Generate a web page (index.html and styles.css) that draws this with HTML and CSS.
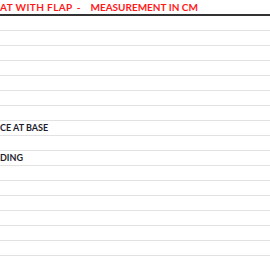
FILE: index.html
```html
<!DOCTYPE html>
<html>
<head>
<meta charset="utf-8">
<link rel="stylesheet" href="styles.css">
</head>
<body>
<div class="sheet">
  <div class="head">
    <span class="h-a">AT WITH FLAP</span>
    <span class="h-dash">-</span>
    <span class="h-b">MEASUREMENT IN CM</span>
  </div>
  <div class="row"></div>
  <div class="row"></div>
  <div class="row"></div>
  <div class="row"></div>
  <div class="row"></div>
  <div class="row"></div>
  <div class="row"></div>
  <div class="row label">CE AT BASE</div>
  <div class="row"></div>
  <div class="row label">DING</div>
  <div class="row"></div>
  <div class="row"></div>
  <div class="row"></div>
  <div class="row"></div>
  <div class="row"></div>
  <div class="row"></div>
</div>
</body>
</html>
```
FILE: styles.css
```css
html, body {
  margin: 0;
  padding: 0;
  background: #ffffff;
}
.sheet {
  width: 270px;
  font-family: "Lato", "Liberation Sans", Arial, sans-serif;
  font-weight: bold;
}
.head {
  height: 14px;
  border-bottom: 2px solid #333333;
  display: flex;
  align-items: center;
  color: #ff1a1a;
  font-size: 10px;
  line-height: 14px;
  white-space: nowrap;
}
.h-a {
  flex: 0 0 auto;
  letter-spacing: 0.4px;
}
.h-dash {
  flex: 0 0 auto;
  margin-left: 4px;
}
.h-b {
  flex: 0 0 auto;
  margin-left: 10px;
}
.row {
  height: 14px;
  border-bottom: 1px solid #e2e2e2;
}
.label {
  color: #1e1e30;
  font-size: 9px;
  line-height: 14px;
  white-space: nowrap;
}
```
